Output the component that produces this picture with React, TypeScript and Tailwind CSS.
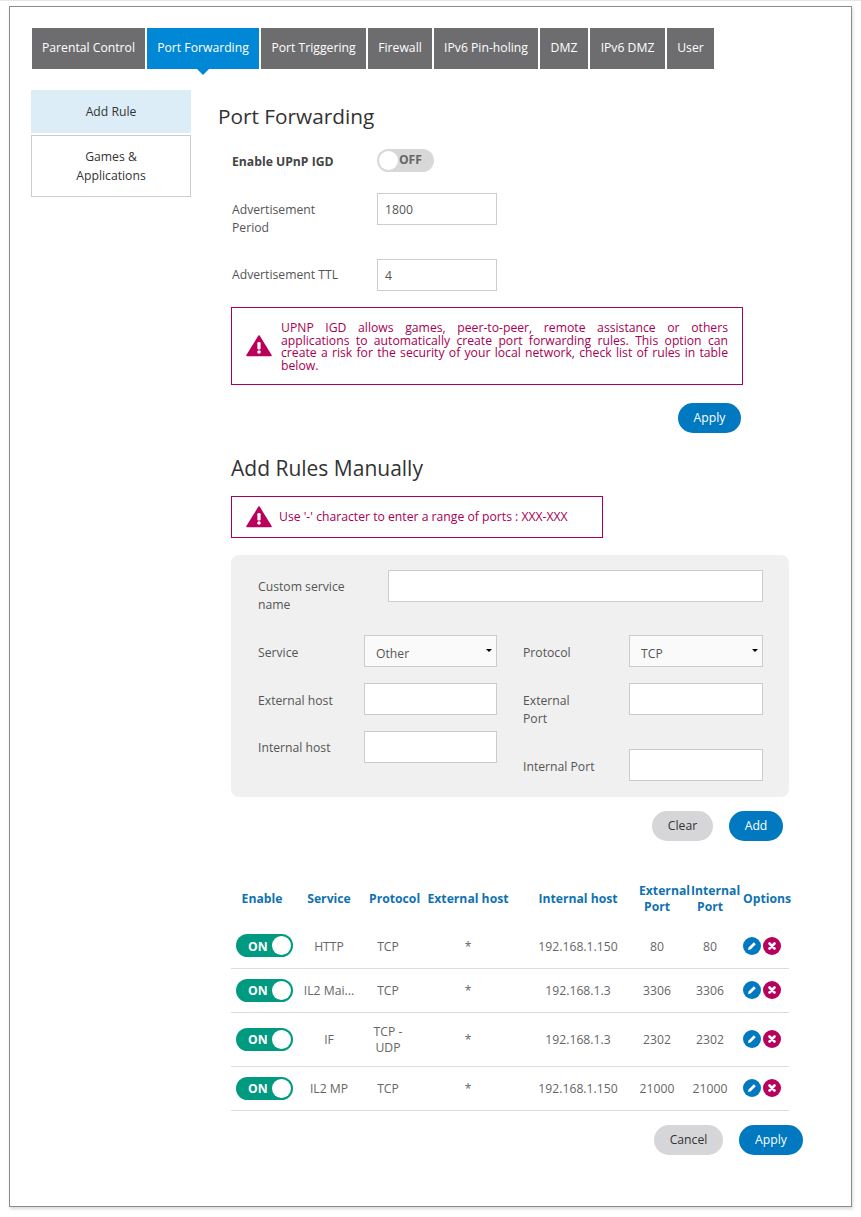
const tabs = [
  { label: "Parental Control", cls: "w-[113px]" },
  { label: "Port Forwarding", cls: "w-[112px]" },
  { label: "Port Triggering", cls: "w-[105px]" },
  { label: "Firewall", cls: "w-[64px]" },
  { label: "IPv6 Pin-holing", cls: "w-[104px]" },
  { label: "DMZ", cls: "w-[48px]" },
  { label: "IPv6 DMZ", cls: "w-[75px]" },
  { label: "User", cls: "w-[47px]" },
];

const rules = [
  { service: "HTTP", protocol: "TCP", internal: "192.168.1.150", ext: "80", int: "80", row: "h-[44px]" },
  { service: "IL2 Mai...", protocol: "TCP", internal: "192.168.1.3", ext: "3306", int: "3306", row: "h-[44px]" },
  { service: "IF", protocol: "TCP - UDP", internal: "192.168.1.3", ext: "2302", int: "2302", row: "h-[54px]" },
  { service: "IL2 MP", protocol: "TCP", internal: "192.168.1.150", ext: "21000", int: "21000", row: "h-[44px]" },
];

function WarnIcon() {
  return (
    <svg width="26" height="22" viewBox="0 0 26 22" className="shrink-0">
      <path d="M13 1 L25 20.5 H1 Z" fill="#b8005c" stroke="#b8005c" strokeWidth="1.5" strokeLinejoin="round" />
      <rect x="11.4" y="7" width="3.2" height="7.5" rx="1.2" fill="#fff" />
      <circle cx="13" cy="17" r="1.8" fill="#fff" />
    </svg>
  );
}

function Btn({ label, kind, cls }: { label: string; kind: "blue" | "gray"; cls: string }) {
  const color = kind === "blue" ? "bg-[#0079c1] text-white" : "bg-[#d6d6d9] text-[#333]";
  return <button className={`h-[30px] rounded-[15px] text-[12.2px] ${color} ${cls}`}>{label}</button>;
}

function Field({ value, cls }: { value?: string; cls: string }) {
  return (
    <input
      defaultValue={value}
      className={`h-[32px] bg-white border border-[#ccc] px-[7px] text-[12.2px] text-[#555] outline-none ${cls}`}
    />
  );
}

function Dropdown({ value, cls }: { value: string; cls: string }) {
  return (
    <div className={`relative h-[32px] ${cls}`}>
      <select defaultValue={value} className="appearance-none w-full h-full bg-[#fafafa] border border-[#ccc] pl-[11px] pt-[6px] text-[12.2px] text-[#555] outline-none">
        <option>{value}</option>
      </select>
      <span className="absolute right-[5px] top-[14px] border-x-[3px] border-x-transparent border-t-[3px] border-t-black" />
    </div>
  );
}

function OnToggle() {
  return (
    <div className="w-[57px] h-[23px] rounded-full bg-[#009a80] flex items-center justify-between pl-[12px] pr-[2px]">
      <span className="pt-[2px] text-[12.2px] font-bold text-white">ON</span>
      <span className="w-[19px] h-[19px] rounded-full bg-white" />
    </div>
  );
}

function EditIcon() {
  return (
    <svg width="18" height="18" viewBox="0 0 18 18">
      <circle cx="9" cy="9" r="9" fill="#0079c1" />
      <path d="M5 13 L5.6 10.4 L10.8 5.2 L12.8 7.2 L7.6 12.4 Z" fill="#fff" />
    </svg>
  );
}

function DeleteIcon() {
  return (
    <svg width="18" height="18" viewBox="0 0 18 18">
      <circle cx="9" cy="9" r="9" fill="#b8005c" />
      <path d="M6.5 6.5 L11.5 11.5 M11.5 6.5 L6.5 11.5" stroke="#fff" strokeWidth="2.6" strokeLinecap="round" />
    </svg>
  );
}

export default function App() {
  return (
    <div className="min-h-[1217px] bg-white border-t border-[#e6e6e6] pt-[5px] pl-[9px] font-['Open_Sans',sans-serif] text-[12.2px] text-[#555]">
      <div className="w-[843px] h-[1201px] border border-[#8c8c8c] bg-white shadow-[1px_2px_3px_rgba(0,0,0,0.15)] pt-[21px] pl-[21px]">
        {/* Tabs */}
        <div className="flex gap-[2px] pl-px">
          {tabs.map((t) => (
            <div
              key={t.label}
              className={`relative h-[41px] flex items-center justify-center whitespace-nowrap text-white ${t.cls} ${t.label === "Port Forwarding" ? "bg-[#0088d6]" : "bg-[#6d6d70]"}`}
            >
              {t.label}
              {t.label === "Port Forwarding" && (
                <span className="absolute left-1/2 -translate-x-1/2 top-full border-x-[6px] border-x-transparent border-t-[6px] border-t-[#0088d6]" />
              )}
            </div>
          ))}
        </div>

        <div className="flex mt-[21px]">
          {/* Sidebar */}
          <div className="w-[160px] shrink-0 flex flex-col gap-[2px] text-[#333] text-center">
            <div className="h-[43px] bg-[#dcedf7] flex items-center justify-center pt-px">Add Rule</div>
            <div className="h-[62px] border border-[#ccc] flex items-center justify-center leading-[19px]">
              Games &<br />Applications
            </div>
          </div>

          {/* Main */}
          <div className="ml-[28px] flex-1">
            <h1 className="mt-[11px] -ml-px text-[20.8px] leading-[30px] text-[#333]">Port Forwarding</h1>

            <div className="ml-[12px]">
              <div className="mt-[18px] flex items-center h-[23px]">
                <span className="w-[146px] font-bold pl-px pt-[4px] text-[#444]">Enable UPnP IGD</span>
                <div className="w-[57px] h-[23px] rounded-full bg-[#d8d8d8] flex items-center justify-between pl-[2px] pr-[12px]">
                  <span className="w-[19px] h-[19px] rounded-full bg-white" />
                  <span className="font-bold text-[#666]">OFF</span>
                </div>
              </div>

              <div className="mt-[21px] flex">
                <div className="w-[146px] pl-px pt-[8px] leading-[18px]">Advertisement<br />Period</div>
                <Field value="1800" cls="w-[120px]" />
              </div>

              <div className="mt-[22px] flex items-center">
                <div className="w-[146px] pl-px pt-px">Advertisement TTL</div>
                <Field value="4" cls="w-[120px]" />
              </div>

              <div className="mt-[16px] w-[512px] h-[78px] border border-[#a5005a] flex items-center pl-[14px] pr-[14px] gap-[9px] text-[#a80052]">
                <WarnIcon />
                <p className="pt-[2px] text-justify leading-[12.5px]">
                  UPNP IGD allows games, peer-to-peer, remote assistance or others applications to automatically create port forwarding rules. This option can create a risk for the security of your local network, check list of rules in table below.
                </p>
              </div>

              <div className="mt-[18px] w-[510px] flex justify-end">
                <Btn label="Apply" kind="blue" cls="w-[63px]" />
              </div>

              <h2 className="mt-[20px] text-[21px] leading-[30px] text-[#333]">Add Rules Manually</h2>

              <div className="mt-[13px] w-[372px] h-[42px] border border-[#a5005a] flex items-center pl-[14px] gap-[7px] text-[#a80052]">
                <WarnIcon />
                <span>Use '-' character to enter a range of ports : XXX-XXX</span>
              </div>

              {/* Add rule form */}
              <div className="mt-[17px] w-[558px] h-[242px] bg-[#f0f0f0] rounded-[8px] pl-[27px] pt-[15px]">
                <div className="flex">
                  <div className="w-[130px] pt-[8px] leading-[18px]">Custom service<br />name</div>
                  <Field cls="w-[375px]" />
                </div>
                <div className="mt-[21px] flex">
                  <div className="w-[239px] flex flex-col gap-[16px]">
                    <div className="flex items-center">
                      <span className="w-[106px] pt-[4px]">Service</span>
                      <Dropdown value="Other" cls="w-[133px]" />
                    </div>
                    <div className="flex items-center">
                      <span className="w-[106px] pt-[4px]">External host</span>
                      <Field cls="w-[133px]" />
                    </div>
                    <div className="flex items-center">
                      <span className="w-[106px] pt-[2px]">Internal host</span>
                      <Field cls="w-[133px]" />
                    </div>
                  </div>
                  <div className="ml-[26px] flex flex-col">
                    <div className="flex items-center">
                      <span className="w-[106px] pt-[4px]">Protocol</span>
                      <Dropdown value="TCP" cls="w-[134px]" />
                    </div>
                    <div className="mt-[16px] flex">
                      <span className="w-[106px] pt-[9px] leading-[18px]">External<br />Port</span>
                      <Field cls="w-[134px]" />
                    </div>
                    <div className="mt-[21px] flex items-center">
                      <span className="w-[106px] pt-[4px]">Internal Port</span>
                      <Field cls="w-[134px]" />
                    </div>
                  </div>
                </div>
              </div>

              <div className="mt-[14px] w-[552px] flex justify-end gap-[16px]">
                <Btn label="Clear" kind="gray" cls="w-[61px]" />
                <Btn label="Add" kind="blue" cls="w-[54px]" />
              </div>

              {/* Rules table */}
              <table className="mt-[34px] w-[558px] table-fixed border-collapse">
                <thead>
                  <tr className="h-[49px] font-bold text-[#0f72b0] text-center leading-[16px] align-top">
                    <th className="w-[62px] font-bold pt-[16px]">Enable</th>
                    <th className="w-[72px] font-bold pt-[16px]">Service</th>
                    <th className="w-[46px] font-bold px-[4px] pt-[16px] whitespace-nowrap">Protocol</th>
                    <th className="w-[114px] font-bold whitespace-nowrap pt-[16px]">External host</th>
                    <th className="w-[106px] font-bold pt-[16px]">Internal host</th>
                    <th className="w-[52px] font-bold px-[8px] pt-[8px]">External Port</th>
                    <th className="w-[54px] font-bold px-[8px] pt-[8px]">Internal Port</th>
                    <th className="w-[52px] font-bold text-left pl-[6px] whitespace-nowrap pt-[16px]">Options</th>
                  </tr>
                </thead>
                <tbody>
                  {rules.map((r) => (
                    <tr key={r.service} className={`${r.row} border-b border-[#ddd] text-center text-[#666]`}>
                      <td className="pl-[5px]"><OnToggle /></td>
                      <td className="whitespace-nowrap pt-[2px]">{r.service}</td>
                      <td className="px-[4px] pt-[2px] leading-[16px]">{r.protocol}</td>
                      <td className="pt-[2px]">*</td>
                      <td className="pt-[2px]">{r.internal}</td>
                      <td className="pt-[2px]">{r.ext}</td>
                      <td className="pt-[2px]">{r.int}</td>
                      <td className="pl-[6px]">
                        <div className="flex gap-[2px]">
                          <EditIcon />
                          <DeleteIcon />
                        </div>
                      </td>
                    </tr>
                  ))}
                </tbody>
              </table>

              <div className="mt-[14px] w-[572px] flex justify-end gap-[16px]">
                <Btn label="Cancel" kind="gray" cls="w-[69px] pt-px" />
                <Btn label="Apply" kind="blue" cls="w-[64px] pt-px" />
              </div>
            </div>
          </div>
        </div>
      </div>
    </div>
  );
}
